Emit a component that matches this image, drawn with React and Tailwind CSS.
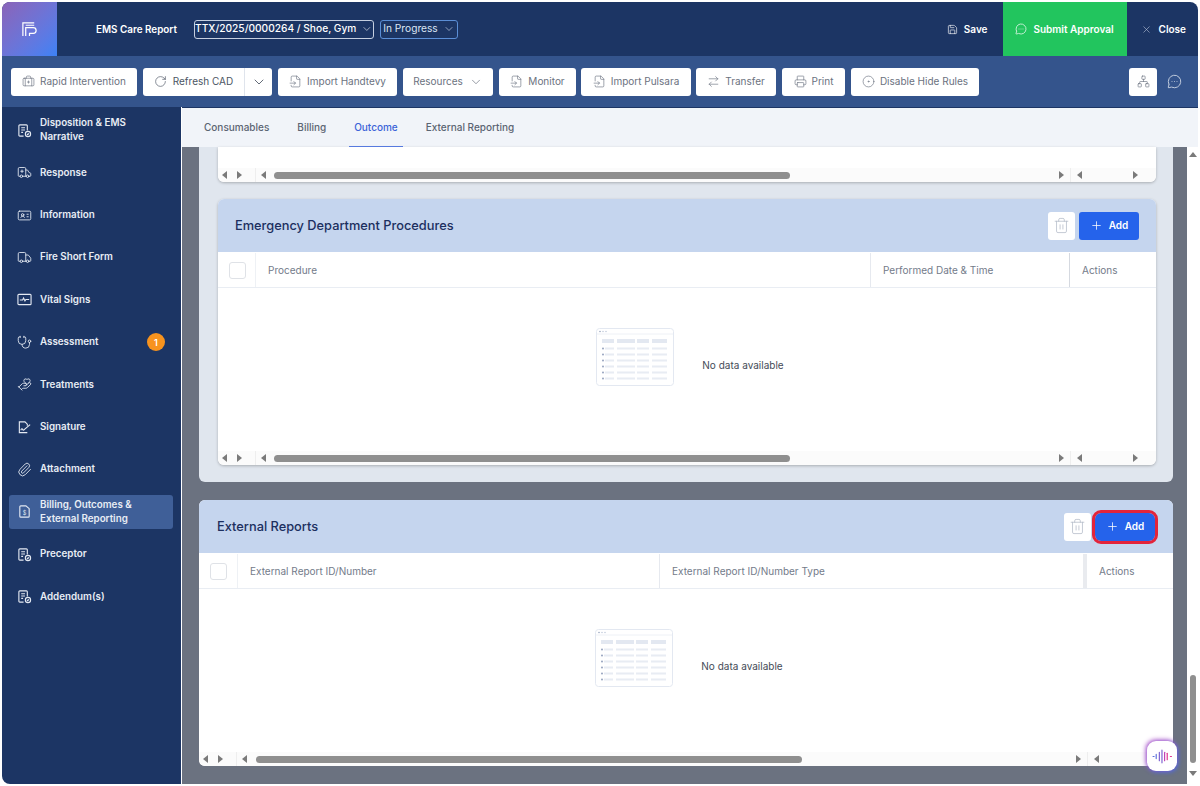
import React from "react";
import {
  Ambulance,
  ArrowRightLeft,
  BriefcaseMedical,
  ChevronDown,
  CircleDot,
  FileInput,
  HandHeart,
  IdCard,
  MessageCircleMore,
  Network,
  Paperclip,
  Plus,
  Printer,
  RotateCw,
  Save,
  Stethoscope,
  Trash2,
  Truck,
  X,
} from "lucide-react";

const toolbarGray = "text-[#6b7280]";

// doc with small check badge, used by a few sidebar rows
function DocCheck({ className = "" }) {
  return (
    <svg viewBox="0 0 16 16" fill="none" stroke="currentColor" strokeWidth="1.2" className={className}>
      <path d="M7 14H3a1 1 0 0 1-1-1V3a1 1 0 0 1 1-1h7a1 1 0 0 1 1 1v5" />
      <path d="M4.5 5h4M4.5 7.5h4M4.5 10h2" />
      <circle cx="11.7" cy="11.7" r="2.8" />
      <path d="M10.6 11.7l.8.8 1.4-1.4" />
    </svg>
  );
}

function VitalIcon({ className = "" }) {
  return (
    <svg viewBox="0 0 16 16" fill="none" stroke="currentColor" strokeWidth="1.2" className={className}>
      <rect x="1" y="2.5" width="14" height="11" rx="1" />
      <path d="M3 8.5h3l1-2 1.5 3 1-1.5H13" />
    </svg>
  );
}

function SignIcon({ className = "" }) {
  return (
    <svg viewBox="0 0 16 16" fill="none" stroke="currentColor" strokeWidth="1.2" className={className}>
      <path d="M11 13.5H2.5V2h6l2.5 2.5V6" />
      <path d="M4 11c1-2 1.5-2 2-1s1 1 2 0l6-5" />
    </svg>
  );
}

function BillIcon({ className = "" }) {
  return (
    <svg viewBox="0 0 16 16" fill="none" stroke="currentColor" strokeWidth="1.2" className={className}>
      <path d="M4 2h5.5L13 5v8a1 1 0 0 1-1 1H4a1 1 0 0 1-1-1V3a1 1 0 0 1 1-1z" />
      <text x="8" y="12" fontSize="6" textAnchor="middle" fill="currentColor" stroke="none">$</text>
    </svg>
  );
}

function LogoMark() {
  return (
    <svg viewBox="0 0 18 18" fill="none" stroke="white" strokeWidth="1.3" className="w-[17px] h-[17px]">
      <path d="M2 16V2h12" />
      <path d="M5 16V7h8a3 3 0 0 1 0 6H9v3" />
      <path d="M5 4.5h9" />
    </svg>
  );
}

function TableEmptyIcon() {
  const rows = [0, 1, 2, 3, 4, 5];
  return (
    <svg viewBox="0 0 78 58" className="w-[78px] h-[58px] shrink-0" fill="none">
      <rect x="0.5" y="0.5" width="77" height="57" rx="3" fill="white" stroke="#e3e8f1" />
      <path d="M1 6h76" stroke="#eef1f6" />
      <circle cx="4" cy="3.5" r="0.8" fill="#9aa7c0" />
      <circle cx="7" cy="3.5" r="0.8" fill="#c4cddd" />
      <circle cx="10" cy="3.5" r="0.8" fill="#c4cddd" />
      <rect x="6" y="11" width="12" height="4" fill="#e3e8f1" />
      <rect x="21" y="11" width="18" height="4" fill="#e3e8f1" />
      <rect x="41" y="11" width="12" height="4" fill="#e3e8f1" />
      <rect x="56" y="11" width="15" height="4" fill="#e3e8f1" />
      {rows.map((r) => (
        <g key={r} fill="#e8ecf3">
          <circle cx="7" cy={20.5 + r * 6} r="0.9" fill="#8c9ab8" />
          <rect x="9" y={19.5 + r * 6} width="9" height="2" />
          <rect x="21" y={19.5 + r * 6} width="18" height="2" />
          <rect x="41" y={19.5 + r * 6} width="12" height="2" />
          <rect x="56" y={19.5 + r * 6} width="15" height="2" />
        </g>
      ))}
    </svg>
  );
}

function Arrow({ dir }) {
  const cls =
    dir === "left"
      ? "border-r-[5px] border-r-[#7a7a7a]"
      : "border-l-[5px] border-l-[#7a7a7a]";
  return <span className={`w-0 h-0 border-y-[4px] border-y-transparent ${cls}`} />;
}

function ToolButton({ icon: Icon, label, width, chevron, className = "" }) {
  return (
    <button
      className={`h-[28px] ${width} ${className} shrink-0 bg-white rounded-[3px] flex items-center justify-center gap-[5px] text-[10px] ${toolbarGray}`}
    >
      {Icon && <Icon className="w-[13px] h-[13px]" strokeWidth={1.2} />}
      <span>{label}</span>
      {chevron && <ChevronDown className="w-[14px] h-[14px] ml-[1px]" strokeWidth={1.2} />}
    </button>
  );
}

const sideItems = [
  { label: ["Disposition & EMS", "Narrative"], icon: DocCheck },
  { label: ["Response"], icon: Ambulance },
  { label: ["Information"], icon: IdCard },
  { label: ["Fire Short Form"], icon: Truck },
  { label: ["Vital Signs"], icon: VitalIcon },
  { label: ["Assessment"], icon: Stethoscope, badge: 1 },
  { label: ["Treatments"], icon: HandHeart },
  { label: ["Signature"], icon: SignIcon },
  { label: ["Attachment"], icon: Paperclip },
  { label: ["Billing, Outcomes &", "External Reporting"], icon: BillIcon, active: true },
  { label: ["Preceptor"], icon: DocCheck },
  { label: ["Addendum(s)"], icon: DocCheck },
];

function Sidebar() {
  return (
    <aside className="w-[179px] shrink-0 bg-[#1c3564] pt-[6.3px] pl-[7px] pr-[8px]">
      {sideItems.map((item) => (
        <div
          key={item.label[0]}
          className={`h-[34px] mb-[8.4px] pl-[8px] pr-[8px] rounded-[3px] flex items-center gap-[8px] ${
            item.active ? "bg-[#3f5f98]" : ""
          }`}
        >
          <item.icon className="w-[15px] h-[15px] shrink-0 text-[#e4e9f2]" strokeWidth={1.4} />
          <div className="flex-1 text-[9.8px] leading-[14px] font-semibold text-[#e8edf5]">
            {item.label.map((l) => (
              <div key={l}>{l}</div>
            ))}
          </div>
          {item.badge && (
            <span className="w-[18px] h-[18px] rounded-full bg-[#f7931e] text-white text-[9px] font-semibold flex items-center justify-center">
              {item.badge}
            </span>
          )}
        </div>
      ))}
    </aside>
  );
}

function ScrollRow({ thumbW, thumbGap }) {
  return (
    <div className="h-[14px] shrink-0 flex items-center bg-[#fbfbfb]">
      <div className="w-[38px] h-full flex items-center gap-[10px] pl-[4px] border-r border-[#eeeeee]">
        <Arrow dir="left" />
        <Arrow dir="right" />
      </div>
      <div className="flex-1 h-full flex items-center pl-[5px] pr-[6.5px] border-r border-[#eeeeee]">
        <Arrow dir="left" />
        <div className={`${thumbGap} ${thumbW} h-[7px] rounded-full bg-[#8f8f8f]`} />
        <div className="flex-1" />
        <Arrow dir="right" />
      </div>
      <div className="w-[85px] h-full flex items-center justify-between pl-[6px] pr-[18.5px]">
        <Arrow dir="left" />
        <Arrow dir="right" />
      </div>
    </div>
  );
}

function EmptyState() {
  return (
    <div className="h-[163px] flex items-start justify-center pl-[6px] pt-[40px]">
      <TableEmptyIcon />
      <span className="ml-[28px] mt-[30px] text-[10px] leading-[15px] text-[#444b57]">No data available</span>
    </div>
  );
}

function HeadActions({ highlight }) {
  return (
    <div className="flex items-center gap-[4px]">
      <button className="w-[27px] h-[28px] bg-white rounded-[3px] flex items-center justify-center text-[#b4bcc9]">
        <Trash2 className="w-[17px] h-[17px]" strokeWidth={1.1} />
      </button>
      <button
        className={`w-[60px] h-[28px] bg-[#2563eb] text-white text-[10px] font-semibold flex items-center justify-center gap-[6px] ${
          highlight ? "outline-[3px] outline-[#e3243b] rounded-[6px]" : "rounded-[3px]"
        }`}
      >
        <Plus className="w-[13px] h-[13px]" strokeWidth={1.4} />
        Add
      </button>
    </div>
  );
}

function TableCard({ title, columns, highlight, checkW, headPad, thumbW, thumbGap, shadowed }) {
  return (
    <section className={`bg-white rounded-[6px] overflow-hidden ${shadowed ? "shadow-[0_1px_3px_rgba(0,0,0,0.25)]" : ""}`}>
      <div className={`h-[53px] bg-[#c5d5ee] ${headPad} flex items-center justify-between`}>
        <h2 className="text-[12.8px] font-medium text-[#1c2f5f]">{title}</h2>
        <HeadActions highlight={highlight} />
      </div>
      <div className="h-[36px] pt-[1px] flex items-stretch border-b border-[#e9edf3] text-[10px] text-[#737b8a]">
        <div className={`${checkW} shrink-0 flex items-center justify-center pl-[1px] border-r border-[#eef1f5]`}>
          <span className="w-[17px] h-[17px] rounded-[3px] border border-[#dfe2e7] bg-white" />
        </div>
        {columns.map((c) => (
          <div key={c.label} className={`${c.width} shrink-0 flex items-center pl-[12px] ${c.border || ""}`}>
            {c.label}
          </div>
        ))}
      </div>
      <EmptyState />
      <ScrollRow thumbW={thumbW} thumbGap={thumbGap} />
    </section>
  );
}

export default function App() {
  return (
    <div className="w-[1200px] h-[786px] bg-white p-[2px] overflow-hidden" style={{ fontFamily: "Inter, 'Liberation Sans', sans-serif" }}>
      <div className="relative h-full rounded-[8px] overflow-hidden flex flex-col">
        {/* top bar */}
        <header className="h-[54px] shrink-0 bg-[#1c3564] flex items-center text-white">
          <div className="w-[55px] h-full flex items-center justify-center bg-gradient-to-br from-[#8a63b8] to-[#3b82f6]">
            <LogoMark />
          </div>
          <span className="ml-[39px] w-[81px] whitespace-nowrap text-[9.9px] font-semibold">EMS Care Report</span>
          <button className="ml-[17px] w-[180px] h-[19px] rounded-[3px] border border-[#c5cfe0] flex items-center justify-center gap-[5px] whitespace-nowrap text-[10.2px] font-medium">
            TTX/2025/0000264 / Shoe, Gym
            <ChevronDown className="w-[12px] h-[12px]" strokeWidth={1.2} />
          </button>
          <button className="ml-[6px] w-[78px] h-[19px] rounded-[3px] border border-[#5b8ed6] flex items-center justify-center gap-[5px] whitespace-nowrap text-[10.2px] text-[#dbe5f5]">
            In Progress
            <ChevronDown className="w-[12px] h-[12px]" strokeWidth={1.2} />
          </button>
          <div className="flex-1" />
          <div className="flex items-center gap-[6px] text-[10px] font-semibold">
            <Save className="w-[11px] h-[11px]" strokeWidth={1.4} />
            Save
          </div>
          <div className="ml-[15px] w-[124px] h-full bg-[#22c55e] flex items-center justify-center gap-[6px] text-[10px] font-semibold">
            <MessageCircleMore className="w-[12px] h-[12px]" strokeWidth={1.4} />
            Submit Approval
          </div>
          <div className="ml-[14px] mr-[12px] flex items-center gap-[7px] text-[10px] font-semibold">
            <X className="w-[11px] h-[11px] text-[#b9c4d8]" strokeWidth={1.3} />
            Close
          </div>
        </header>

        {/* toolbar */}
        <div className="h-[51px] shrink-0 bg-[#34548c] flex items-center pl-[9px] pr-[41px] gap-[6px]">
          <ToolButton icon={BriefcaseMedical} label="Rapid Intervention" width="w-[126px]" />
          <div className="h-[28px] w-[129px] shrink-0 bg-white rounded-[3px] flex items-center text-[10px] text-[#4b5563]">
            <div className="flex-1 flex items-center justify-center gap-[6px]">
              <RotateCw className="w-[13px] h-[13px]" strokeWidth={1.2} />
              Refresh CAD
            </div>
            <div className="w-[28px] h-full border-l border-[#dfe4ec] flex items-center justify-center">
              <ChevronDown className="w-[16px] h-[16px]" strokeWidth={1.3} />
            </div>
          </div>
          <ToolButton icon={FileInput} label="Import Handtevy" width="w-[119px]" />
          <ToolButton label="Resources" width="w-[90px]" chevron />
          <ToolButton icon={FileInput} label="Monitor" width="w-[77px]" />
          <ToolButton icon={FileInput} label="Import Pulsara" width="w-[110px]" className="-ml-[1px]" />
          <ToolButton icon={ArrowRightLeft} label="Transfer" width="w-[80px]" className="-ml-[1px]" />
          <ToolButton icon={Printer} label="Print" width="w-[63px]" />
          <ToolButton icon={CircleDot} label="Disable Hide Rules" width="w-[128px]" />
          <div className="flex-1" />
          <button className="w-[28px] h-[28px] bg-white rounded-[3px] flex items-center justify-center text-[#6b7280]">
            <Network className="w-[13px] h-[13px]" strokeWidth={1.2} />
          </button>
          <MessageCircleMore className="ml-[4px] -mr-[25px] w-[15px] h-[15px] text-[#dfe5ef]" strokeWidth={1.3} />
        </div>

        <div className="flex-1 min-h-0 flex">
          <Sidebar />

          <main className="flex-1 min-w-0 flex flex-col ml-[1px]">
            {/* tabs */}
            <nav className="h-[40px] shrink-0 bg-[#f1f4f9] border-t border-[#1c3564] flex items-stretch pl-[17px] gap-[18px] text-[10px] font-medium text-[#5b6472]">
              <div className="px-[5px] flex items-center border-b border-transparent">Consumables</div>
              <div className="px-[5px] flex items-center border-b border-transparent">Billing</div>
              <div className="px-[5px] flex items-center text-[#3b63d8] border-b border-[#5b7fe8]">Outcome</div>
              <div className="px-[5px] flex items-center border-b border-transparent">External Reporting</div>
            </nav>

            <div className="flex-1 min-h-0 flex">
              <div className="flex-1 min-w-0 bg-[#6b7280] pl-[17px] pr-[14px]">
                <div className="bg-[#e0e6ee] rounded-b-[6px] pl-[19px] pr-[17px] pb-[17px]">
                  <div className="h-[35px] bg-white rounded-b-[6px] flex flex-col justify-end overflow-hidden shadow-[0_1px_3px_rgba(0,0,0,0.25)]">
                    <ScrollRow thumbW="w-[516px]" thumbGap="ml-[8px]" />
                  </div>
                  <div className="mt-[17px]">
                    <TableCard
                      title="Emergency Department Procedures"
                      checkW="w-[38px]"
                      headPad="pl-[17px] pr-[17px]"
                      thumbW="w-[516px]"
                      thumbGap="ml-[8px]"
                      shadowed
                      columns={[
                        { label: "Procedure", width: "w-[615px]", border: "border-r border-[#e6e9ef]" },
                        { label: "Performed Date & Time", width: "w-[199px]", border: "border-r border-[#d5d9e0]" },
                        { label: "Actions", width: "w-[86px]" },
                      ]}
                    />
                  </div>
                </div>

                <div className="mt-[18px]">
                  <TableCard
                    title="External Reports"
                    checkW="w-[39px]"
                    headPad="pl-[18px] pr-[18px]"
                    thumbW="w-[546px]"
                    thumbGap="ml-[9px]"
                    highlight
                    columns={[
                      { label: "External Report ID/Number", width: "w-[422px]", border: "border-r border-[#e6e9ef]" },
                      { label: "External Report ID/Number Type", width: "w-[427px]", border: "border-r-[4px] border-[#e9ebef]" },
                      { label: "Actions", width: "w-[86px]" },
                    ]}
                  />
                </div>
              </div>

              {/* page scrollbar */}
              <div className="w-[11px] shrink-0 bg-white flex flex-col items-center pt-[5px] pb-[8px]">
                <span className="w-0 h-0 border-x-[4px] border-x-transparent border-b-[5px] border-b-[#7a7a7a]" />
                <div className="flex-1" />
                <div className="w-[6px] h-[88px] rounded-full bg-[#8f8f8f] mb-[8px]" />
                <span className="w-0 h-0 border-x-[4px] border-x-transparent border-t-[5px] border-t-[#7a7a7a]" />
              </div>
            </div>
          </main>
        </div>

        {/* voice assistant button */}
        <button className="absolute left-[1145px] top-[739px] w-[30px] h-[30px] rounded-[9px] bg-white shadow-[-1px_-1px_5px_#b14fc7,1px_1px_4px_#3b6fe8] flex items-center justify-center">
          <svg viewBox="0 0 20 14" className="w-[21px] h-[15px]" fill="none" strokeWidth="1.1" strokeLinecap="round">
            <path d="M1 7h1M4 5v4" stroke="#5a6fd8" />
            <path d="M7 3v8M9.5 1v12" stroke="#7a5fd0" />
            <path d="M12 3v8" stroke="#c23fb5" />
            <path d="M14.5 4v6" stroke="#e0308f" />
            <path d="M17.5 7h1" stroke="#e0308f" />
          </svg>
        </button>
      </div>
    </div>
  );
}
